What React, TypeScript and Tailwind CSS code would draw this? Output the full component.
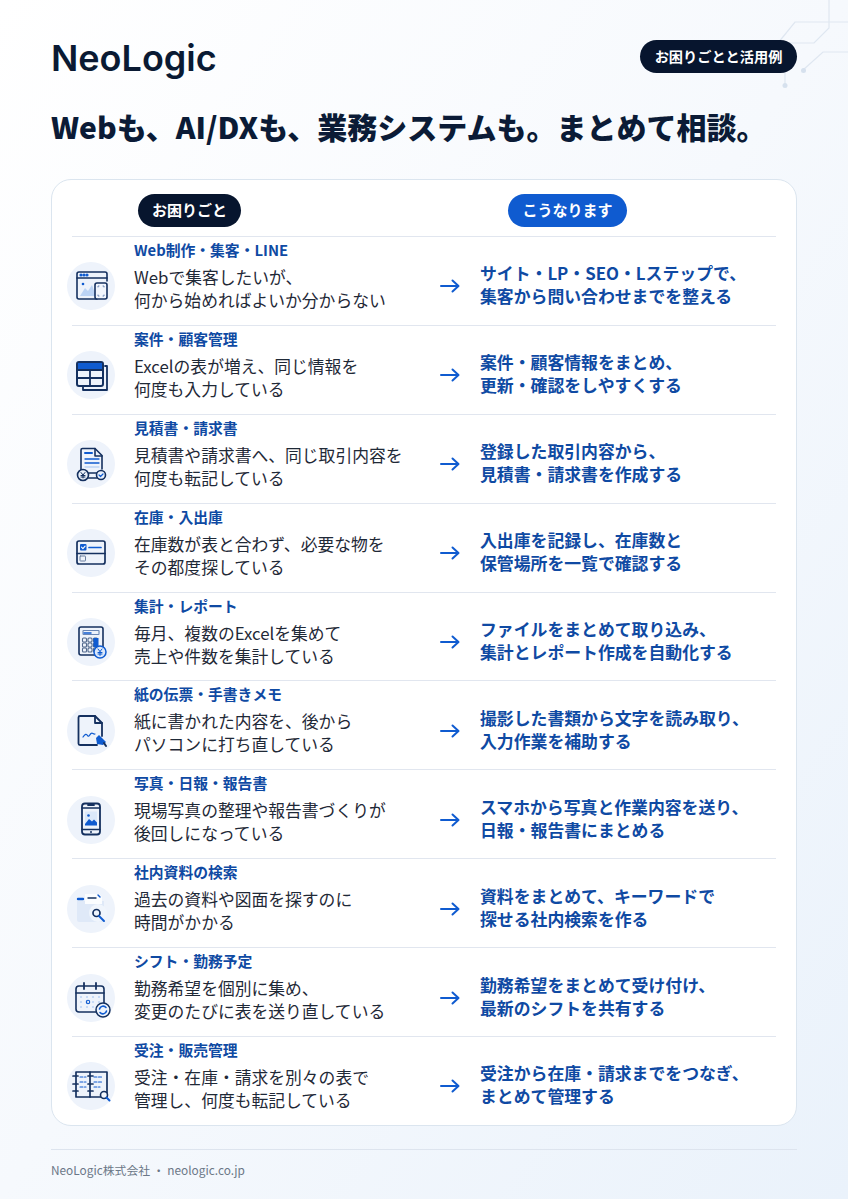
import type { ReactNode } from "react"

const navy = "#14305f"
const blue = "#0f5bd0"
const pale = "#bcd4f5"

function Glyph({ children }: { children: ReactNode }) {
  return (
    <svg viewBox="0 0 48 48" className="h-12 w-12" fill="none" stroke={navy} strokeWidth="1.6" strokeLinecap="round" strokeLinejoin="round">
      {children}
    </svg>
  )
}

const icons: Record<string, ReactNode> = {
  web: (
    <Glyph>
      <path d="M30 37H12a2 2 0 0 1-2-2V12a2 2 0 0 1 2-2h26a2 2 0 0 1 2 2v7" />
      <path d="M10 16h30" />
      <circle cx="14" cy="13" r=".8" stroke={blue} />
      <circle cx="17" cy="13" r=".8" stroke={blue} />
      <circle cx="20" cy="13" r=".8" stroke={blue} />
      <path d="M13 34l5-8 3 3 4-6 4 11z" fill={pale} stroke="none" />
      <circle cx="16" cy="22" r="1.300" fill={blue} stroke="none" />
      <rect x="28" y="21" width="12" height="16" rx="2" fill="#f2f6fd" />
      <path d="M31 25v-1h1M37 25v-1h-1M31 33v1h1M37 33v1h-1" stroke="#6a86b4" strokeWidth="1" />
    </Glyph>
  ),
  table: (
    <Glyph>
      <path d="M38 15h2v24H16v-3" strokeWidth="1.800" />
      <rect x="10" y="11" width="26" height="24" rx="2" strokeWidth="2" />
      <path d="M11 12h24v7H11z" fill={blue} stroke="none" />
      <path d="M10 19h26M10 27h26M23 19v16" strokeWidth="1.800" />
    </Glyph>
  ),
  invoice: (
    <Glyph>
      <path d="M14 31V10a1.500 1.500 0 0 1 1.500-1.500H28l7 7V29" />
      <path d="M28 8.500V16h7" />
      <path d="M18 13h7" stroke={blue} strokeWidth="2" />
      <path d="M18 19h14M18 23h14" stroke={blue} strokeWidth="1.300" />
      <path d="M18 27h14" stroke={pale} strokeWidth="1.300" />
      <path d="M20 38h10M22 33h8" />
      <circle cx="16" cy="35" r="5.500" fill="#eaf1fb" strokeWidth="1.600" />
      <path d="M14 32.500l2 2.500 2-2.500M16 35v3M14 35.500h4M14 37h4" strokeWidth="1" />
      <circle cx="34" cy="35" r="4.500" fill="#eaf1fb" />
      <path d="M32 35l1.500 1.500 2.500-2.500" stroke={blue} strokeWidth="1.200" />
    </Glyph>
  ),
  stock: (
    <Glyph>
      <rect x="10" y="12" width="28" height="23" rx="2" strokeWidth="1.700" />
      <path d="M10 24.500h28" strokeWidth="1.700" />
      <rect x="13" y="15" width="6.500" height="6.500" rx="1" fill={blue} stroke="none" />
      <path d="M14.500 18.200l1.400 1.400 2.200-2.400" stroke="#fff" strokeWidth="1.100" />
      <path d="M22 18.500h12" stroke={blue} strokeWidth="1.700" />
      <rect x="13" y="27" width="5.500" height="5" rx=".5" stroke="#6a7f9f" strokeWidth="1" />
    </Glyph>
  ),
  calc: (
    <Glyph>
      <rect x="12" y="9" width="24" height="28" rx="2" strokeWidth="1.600" />
      <rect x="16" y="12.500" width="16" height="4" rx=".5" stroke="#6a86b4" strokeWidth="1.100" />
      <path d="M17 15h7" stroke={blue} strokeWidth="1.500" />
      {[20, 25, 30].map((y) =>
        [15.500, 21, 26.500].map((x) => (
          <rect key={`${x}-${y}`} x={x} y={y} width="4" height="4" rx="1" stroke="#51688c" strokeWidth="1.100" />
        ))
      )}
      <rect x="26.500" y="20" width="5" height="9" fill={blue} stroke="none" />
      <circle cx="33" cy="34" r="6" fill="#dbe8fa" stroke={blue} strokeWidth="1.500" />
      <path d="M31 31l2 2.500 2-2.500M33 33.500V37.500M31 34.500h4M31 36h4" stroke={blue} strokeWidth="1" />
    </Glyph>
  ),
  paper: (
    <Glyph>
      <path d="M30 38H13a1.500 1.500 0 0 1-1.500-1.500v-26A1.500 1.500 0 0 1 13 9h15l7 7v13" strokeWidth="1.800" />
      <path d="M28 9v7h7" strokeWidth="1.800" />
      <path d="M16 30c2-3 3.500-3.500 4.500-1.500s2-.5 3.500-2 2 1 4 .5" stroke={blue} strokeWidth="1.200" />
      <path d="M29 31l3-3 7 7-3 3-6-1z" fill={blue} stroke="none" />
      <path d="M37 36l2 3" stroke={navy} strokeWidth="2" />
    </Glyph>
  ),
  phone: (
    <Glyph>
      <rect x="15" y="7.500" width="18" height="31" rx="3" strokeWidth="1.800" />
      <path d="M21 9h6" strokeWidth="1.800" />
      <path d="M15 12h18M15 33.500h18" strokeWidth="1.300" />
      <rect x="18" y="15.500" width="12" height="14" fill="#dbe8fa" stroke="none" />
      <circle cx="21.500" cy="19.500" r="1.300" fill={blue} stroke="none" />
      <path d="M18 28l4-5 3 2.500 2-2 3 3v3H18z" fill={blue} stroke="none" />
      <circle cx="24" cy="36" r="1" fill={navy} stroke="none" />
    </Glyph>
  ),
  search: (
    <Glyph>
      <path d="M10 16h27v21H12a2 2 0 0 1-2-2z" fill="#dfe9f8" stroke="none" />
      <path d="M18 9h14l3 3v7H18z" fill="#fbfdff" stroke="none" />
      <path d="M21 13h8" stroke={navy} strokeWidth="1.400" />
      <path d="M11 14h5" stroke={blue} strokeWidth="2.400" />
      <path d="M31 10l2 2" stroke={blue} strokeWidth="1.400" />
      <circle cx="31" cy="28" r="9" fill="#f0f5fc" stroke="none" />
      <circle cx="29.500" cy="28" r="3.500" stroke={navy} strokeWidth="1.700" />
      <path d="M32 31l5 5" stroke={blue} strokeWidth="2" />
    </Glyph>
  ),
  calendar: (
    <Glyph>
      <rect x="9" y="12" width="28" height="26" rx="3" strokeWidth="1.600" />
      <path d="M9 19h28" strokeWidth="1.600" />
      <path d="M17 9v6M29 9v6" strokeWidth="1.800" />
      {[23, 28, 33].map((y) =>
        [14, 20, 26, 32].map((x) => (
          <circle key={`${x}-${y}`} cx={x} cy={y} r="1.100" fill={pale} stroke="none" />
        ))
      )}
      <circle cx="21" cy="28" r="1.700" stroke={blue} strokeWidth="1.100" />
      <circle cx="36" cy="36" r="7" fill="#eef4fc" strokeWidth="1.500" />
      <path d="M32.500 35a3.700 3.700 0 0 1 6.500-1.500M39.500 37a3.700 3.700 0 0 1-6.500 1.500" stroke={blue} strokeWidth="1.600" />
    </Glyph>
  ),
  ledger: (
    <Glyph>
      <path d="M9 10h31v25H9z" strokeWidth="1.700" />
      <path d="M23 10v25" strokeWidth="1.700" />
      <path d="M6 14h5M6 22h5M6 29h5M21 14h5M21 22h5M21 29h5" strokeWidth="1.700" />
      <path d="M13 15h6M13 20h6M13 25h6M27 15h9M27 20h9M27 25h6" stroke={blue} strokeWidth="1.100" strokeDasharray="3 1.500" />
      <circle cx="37" cy="33" r="3.500" fill="#f2f6fd" strokeWidth="1.600" />
      <path d="M39.500 35.500l3 3" stroke={blue} strokeWidth="2" />
    </Glyph>
  ),
}

const rows = [
  { icon: "web", label: "Web制作・集客・LINE", before: ["Webで集客したいが、", "何から始めればよいか分からない"], after: ["サイト・LP・SEO・Lステップで、", "集客から問い合わせまでを整える"] },
  { icon: "table", label: "案件・顧客管理", before: ["Excelの表が増え、同じ情報を", "何度も入力している"], after: ["案件・顧客情報をまとめ、", "更新・確認をしやすくする"] },
  { icon: "invoice", label: "見積書・請求書", before: ["見積書や請求書へ、同じ取引内容を", "何度も転記している"], after: ["登録した取引内容から、", "見積書・請求書を作成する"] },
  { icon: "stock", label: "在庫・入出庫", before: ["在庫数が表と合わず、必要な物を", "その都度探している"], after: ["入出庫を記録し、在庫数と", "保管場所を一覧で確認する"] },
  { icon: "calc", label: "集計・レポート", before: ["毎月、複数のExcelを集めて", "売上や件数を集計している"], after: ["ファイルをまとめて取り込み、", "集計とレポート作成を自動化する"] },
  { icon: "paper", label: "紙の伝票・手書きメモ", before: ["紙に書かれた内容を、後から", "パソコンに打ち直している"], after: ["撮影した書類から文字を読み取り、", "入力作業を補助する"] },
  { icon: "phone", label: "写真・日報・報告書", before: ["現場写真の整理や報告書づくりが", "後回しになっている"], after: ["スマホから写真と作業内容を送り、", "日報・報告書にまとめる"] },
  { icon: "search", label: "社内資料の検索", before: ["過去の資料や図面を探すのに", "時間がかかる"], after: ["資料をまとめて、キーワードで", "探せる社内検索を作る"] },
  { icon: "calendar", label: "シフト・勤務予定", before: ["勤務希望を個別に集め、", "変更のたびに表を送り直している"], after: ["勤務希望をまとめて受け付け、", "最新のシフトを共有する"] },
  { icon: "ledger", label: "受注・販売管理", before: ["受注・在庫・請求を別々の表で", "管理し、何度も転記している"], after: ["受注から在庫・請求までをつなぎ、", "まとめて管理する"] },
]

function Row({ icon, label, before, after }: (typeof rows)[number]) {
  return (
    <div className="grid h-[88.900px] grid-cols-[62px_304px_40px_1fr] items-center border-t-[1.500px] border-[#e1e6ef]">
      <div className="-ml-[5px] mt-[11px] flex h-12 w-12 items-center justify-center rounded-full bg-[#eef3fb]">
        {icons[icon]}
      </div>
      <div className="self-start pt-[1px]">
        <p className="text-[14.800px] leading-[24px] font-bold text-[#0f4aa3]">{label}</p>
        <p className="mt-[4px] text-[16.800px] leading-[23px] text-[#1f2937]">
          {before[0]}
          <br />
          {before[1]}
        </p>
      </div>
      <svg viewBox="0 0 22 16" className="mt-[11px] ml-[1px] h-4 w-[22px]" fill="none" stroke={blue} strokeWidth="2" strokeLinecap="round" strokeLinejoin="round">
        <path d="M2 8h17M13.500 2.500L19.500 8l-6 5.500" />
      </svg>
      <p className="mt-[7px] ml-[2px] text-[16.850px] leading-[23px] font-bold whitespace-nowrap text-[#0f4aa3]">
        {after[0]}
        <br />
        {after[1]}
      </p>
    </div>
  )
}

export default function App() {
  return (
    <div className="relative h-[1199px] w-[848px] overflow-hidden bg-gradient-to-br from-[#ffffff] via-[#f6f9fd] to-[#eaf2fb] px-[51px] font-['Noto_Sans_CJK_JP','Noto_Sans',sans-serif]">
      <svg className="absolute top-0 right-0 h-[100px] w-[80px]" viewBox="0 0 80 100" fill="none" stroke="#dfe7f1" strokeWidth="1.200">
        <path d="M61 0v28L46 43H20l-14 14" />
        <path d="M80 22H27L10 43" />
        <path d="M80 52H55L35 70" />
        <path d="M17 68v17" />
        <circle cx="35.500" cy="70.500" r="2.500" fill="#d6e1ee" stroke="none" />
        <circle cx="17" cy="85.500" r="2.500" fill="#d6e1ee" stroke="none" />
      </svg>

      <header className="relative flex h-[106px] items-start justify-between">
        <span className="mt-[33px] font-['Inter',sans-serif] text-[36px] leading-[50px] font-semibold text-[#0a1a33]">NeoLogic</span>
        <span className="mt-[40px] flex h-[33px] w-[157px] items-center justify-center rounded-full bg-[#07152e] text-[14.200px] font-bold text-white">お困りごとと活用例</span>
      </header>

      <h1 className="relative text-[30px] leading-[40px] font-black whitespace-nowrap text-[#0b1b36]">Webも、AI/DXも、業務システムも。まとめて相談。</h1>

      <main className="mt-[33px] h-[947px] rounded-[20px] border-[1.500px] border-[#dbe5ef] bg-white px-[20px]">
        <div className="flex h-[56px] items-end pb-[9px]">
          <span className="ml-[66px] flex h-[33px] w-[103px] items-center justify-center rounded-full bg-[#07152e] text-[15px] font-bold text-white">お困りごと</span>
          <span className="ml-[267px] flex h-[33px] w-[119px] items-center justify-center rounded-full bg-[#0f5bd0] text-[15px] font-bold text-white">こうなります</span>
        </div>
        {rows.map((row) => (
          <Row key={row.icon} {...row} />
        ))}
      </main>

      <footer className="mt-[23px] border-t-[1.500px] border-[#dde4ee] pt-[10px] text-[11.850px] leading-[20px] text-[#6b7787]">
        NeoLogic株式会社 ・ neologic.co.jp
      </footer>
    </div>
  )
}
